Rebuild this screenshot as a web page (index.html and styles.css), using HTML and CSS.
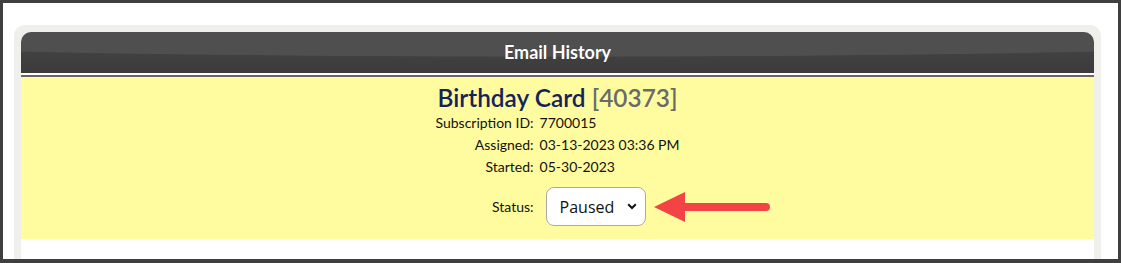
FILE: index.html
```html
<!DOCTYPE html>
<html lang="en">
<head>
    <meta charset="UTF-8">
    <title>Email History</title>
    <link rel="stylesheet" href="styles.css">
</head>
<body>
    <div class="frame">
        <div class="panel">
            <div class="panel-head">Email History</div>
            <div class="panel-body">
                <div class="summary">
                    <h2 class="title">Birthday Card <span class="title-id">[40373]</span></h2>
                    <div class="details">
                        <span class="label">Subscription ID:</span>
                        <span class="value">7700015</span>

                        <span class="label">Assigned:</span>
                        <span class="value">03-13-2023 03:36 PM</span>

                        <span class="label">Started:</span>
                        <span class="value">05-30-2023</span>

                        <span class="label label-status">Status:</span>
                        <span class="value value-status">
                            <select class="status-select">
                                <option>Paused</option>
                                <option>Active</option>
                                <option>Stopped</option>
                            </select>
                            <!-- annotation arrow -->
                            <svg class="callout" width="116" height="32" viewBox="0 0 116 32">
                                <path d="M29 16 H112" stroke="#f24444" stroke-width="8" stroke-linecap="round"/>
                                <path d="M0 16 L31 1 L31 31 Z" fill="#f24444"/>
                            </svg>
                        </span>
                    </div>
                </div>
            </div>
        </div>
    </div>
</body>
</html>
```

FILE: styles.css
```css
* {
    margin: 0;
    padding: 0;
    box-sizing: border-box;
}

body {
    font-family: Lato, "Open Sans", Arial, sans-serif;
    background-color: #fff;
}

.frame {
    height: 263px;
    border: 3px solid #3f3f3f;
    border-bottom-width: 4px;
    padding: 22px 17px 0 11px;
    overflow: hidden;
}

.panel {
    background-color: #efefeb;
    border-radius: 11px 11px 0 0;
    padding: 7px 7px 0;
    height: 100%;
}

.panel-head {
    height: 41px;
    line-height: 41px;
    border-radius: 10px 10px 0 0;
    background:
        radial-gradient(900px 25px at 50% 0, #4f4f4f 97%, rgba(79, 79, 79, 0) 100%),
        linear-gradient(#474747, #3b3b3b);
    color: #fff;
    text-align: center;
    font-size: 18px;
    font-weight: bold;
    text-shadow: 0 0 1px rgba(0, 0, 0, 0.4);
}

.panel-body {
    background-color: #fff;
    padding-top: 2px;
    height: calc(100% - 41px);
}

.summary {
    background-color: #fffc9f;
    border-top: 2px solid #666;
    padding: 7px 0 13px;
    text-align: center;
}

.title {
    font-size: 24.4px;
    font-weight: 600;
    line-height: 28px;
    color: #15235a;
}

.title-id {
    color: #6a6a6a;
}

.details {
    display: inline-grid;
    grid-template-columns: auto auto;
    column-gap: 6px;
    font-size: 14px;
    line-height: 22px;
    color: #111;
    text-align: left;
}

.label {
    text-align: right;
}

.label-status,
.value-status {
    margin-top: 9px;
    line-height: 39px;
}

.value-status {
    position: relative;
    height: 39px;
    padding-left: 6px;
}

.status-select {
    appearance: none;
    width: 100px;
    height: 39px;
    border: 1px solid #a9a9a9;
    border-radius: 8px;
    padding-left: 13px;
    font-family: "Open Sans", "Noto Sans", Arial, sans-serif;
    font-size: 16px;
    color: #111;
    background: #fff url("data:image/svg+xml,%3Csvg xmlns='http://www.w3.org/2000/svg' width='10' height='7' viewBox='0 0 10 7'%3E%3Cpath d='M1.2 1.2 L5 5 L8.8 1.2' fill='none' stroke='%23111' stroke-width='2'/%3E%3C/svg%3E") no-repeat right 8px center;
}

.callout {
    position: absolute;
    left: 114px;
    top: 4px;
}
```
